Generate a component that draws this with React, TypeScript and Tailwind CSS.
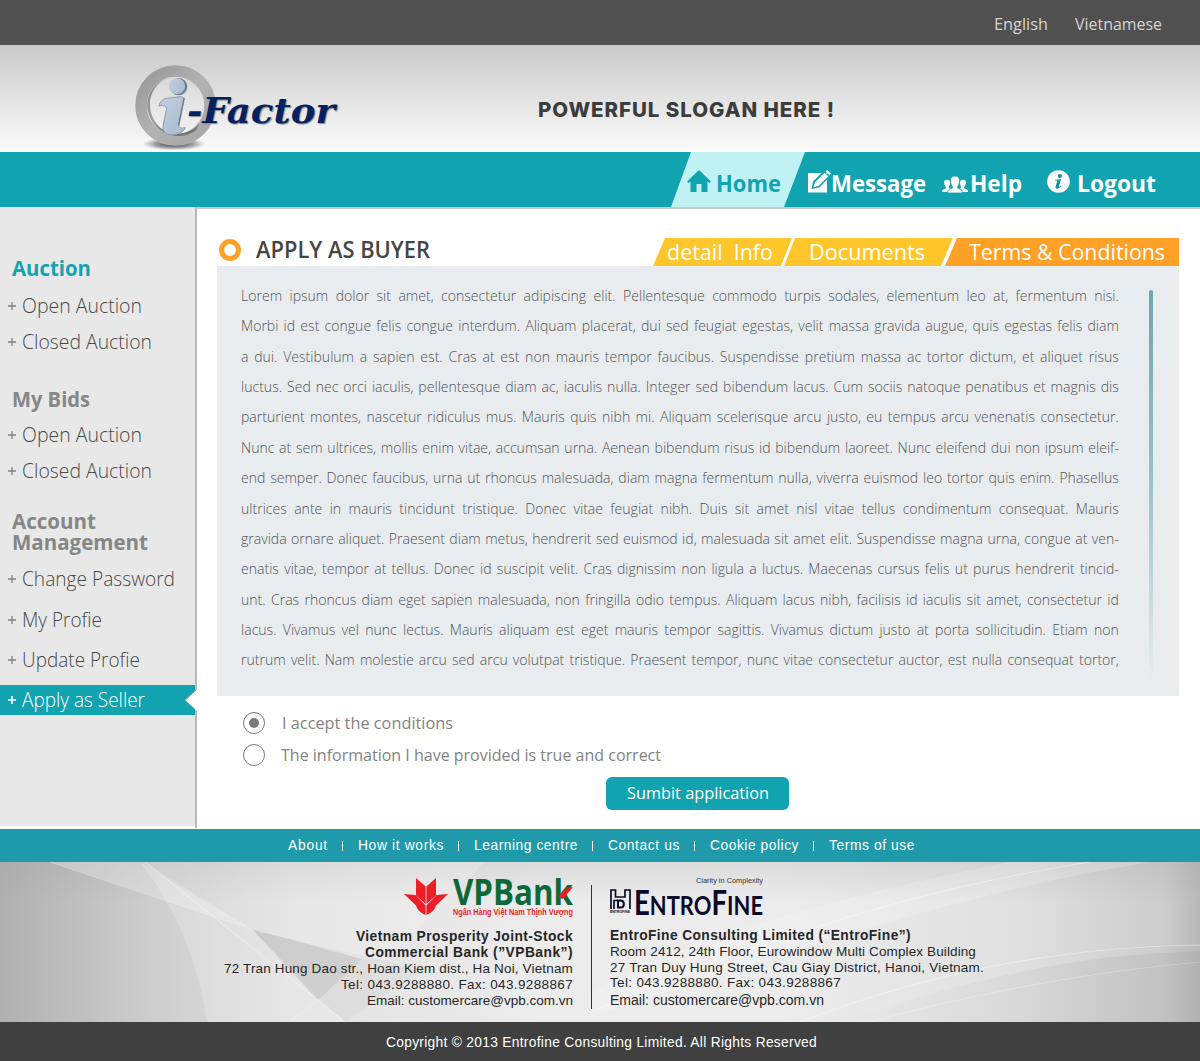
import { useLayoutEffect, useRef } from "react";
import type { ReactNode } from "react";

type FitProps = { className: string; spread?: boolean; children: ReactNode };

/** One line of text that fills its box exactly, by narrowing the glyphs or by letter spacing. */
function Fit({ className, spread, children }: FitProps) {
  const box = useRef<HTMLSpanElement>(null);
  const text = useRef<HTMLSpanElement>(null);
  useLayoutEffect(() => {
    const b = box.current;
    const t = text.current;
    if (!b || !t) return;
    t.style.transform = "none";
    t.style.letterSpacing = "0px";
    const want = b.clientWidth;
    const have = t.getBoundingClientRect().width;
    if (spread) {
      const n = (t.textContent || "").length;
      t.style.letterSpacing = `${(want - have) / n}px`;
    } else {
      t.style.transform = `scaleX(${want / have})`;
    }
  }, [spread]);
  return (
    <span ref={box} className={`block shrink-0 whitespace-nowrap ${className}`}>
      <span ref={text} className="inline-block origin-left whitespace-pre">
        {children}
      </span>
    </span>
  );
}

function Logo() {
  return (
    <div className="relative ml-[130px] mt-[17px] h-[90px] w-[212px]">
      <svg viewBox="130 62 90 90" className="h-[90px] w-[90px]">
        <defs>
          <linearGradient id="ring" x1="0" y1="0" x2="1" y2="1">
            <stop offset="0" stopColor="#979797" />
            <stop offset="0.5" stopColor="#b3b3b3" />
            <stop offset="1" stopColor="#a6a6a6" />
          </linearGradient>
          <linearGradient id="rim" x1="0" y1="0" x2="1" y2="1">
            <stop offset="0" stopColor="#858585" />
            <stop offset="1" stopColor="#b5b5b5" />
          </linearGradient>
          <radialGradient id="floor">
            <stop offset="0" stopColor="#222" stopOpacity="0.9" />
            <stop offset="0.6" stopColor="#444" stopOpacity="0.5" />
            <stop offset="1" stopColor="#777" stopOpacity="0" />
          </radialGradient>
          <linearGradient id="glyph" x1="0" y1="0" x2="1" y2="1">
            <stop offset="0" stopColor="#c3d0e0" />
            <stop offset="1" stopColor="#a9b9cd" />
          </linearGradient>
        </defs>
        <ellipse cx="174" cy="144" rx="32" ry="6.500" fill="url(#floor)" />
        <circle cx="175.500" cy="105.500" r="34.500" fill="none" stroke="url(#ring)" strokeWidth="11.500" />
        <path d="M168 77.500C152 84 146 96 147.500 109C150 124 161 133.500 172 134C160 130 151 120 150 107C149 94 156 83 168 77.500Z" fill="url(#rim)" />
        <path d="M154 122C160 130 169 133.500 178 133.500C187 133 194 130 199 124L196 130C190 135 184 136 177 136C167 135 159 130 154 122Z" fill="#747474" />
        <circle cx="178.600" cy="86.600" r="8.700" fill="#6b7d93" />
        <circle cx="177" cy="86.200" r="8" fill="url(#glyph)" />
        <path
          d="M159 106C160 100 165 98 170 98L181 96.500L184.500 98.500L179 125C179 128 181 128.500 185.500 127.500C184 132 177 135.500 170 134.800C164 134 162.500 130 163 126L166.500 109C166.500 105.500 164 105 159 106Z"
          fill="url(#glyph)"
          stroke="#8695a8"
          strokeWidth=".9"
        />
        <path d="M184 98L178.500 125.500" stroke="#66788f" strokeWidth="1.200" />
      </svg>
      <span className="absolute left-[57px] top-[23px] font-['DejaVu_Serif'] text-[36px] font-bold italic leading-[50px] text-[#06215f] [text-shadow:1px_1px_1px_#8a8a8a]">
        <Fit className="w-[148px]">-Factor</Fit>
      </span>
    </div>
  );
}

function HomeIcon() {
  return (
    <svg viewBox="0 0 24 22" className="h-[22px] w-[24px] fill-[#12a3b0]">
      <path d="M12 0L24 11.500L22.500 13L20.500 11.500V22H14.500V14H9.500V22H3.500V11.500L1.500 13L0 11.500Z" />
    </svg>
  );
}

function EditIcon() {
  return (
    <svg viewBox="0 0 23 23" className="h-[23px] w-[23px]">
      <path d="M0 3H19V22.500H0Z" fill="#fff" />
      <path d="M3.500 19L5 11.500L15.500 1L22 6.500L11.500 17.500Z" fill="#12a3b0" />
      <path d="M5.500 17.300L7 12.500L16.500 2.800L20.300 6.300L10.500 16Z" fill="#fff" />
      <path d="M17.500 1.700L19 0L23 3.500L21.500 5.300Z" fill="#fff" />
    </svg>
  );
}

function PeopleIcon() {
  return (
    <svg viewBox="0 0 26 17" className="h-[17px] w-[26px] fill-white">
      <path d="M0 16C0 14 1 13 4 12.200C4.500 11 2 9 2 6.500C2 4.500 3.500 3.500 5.500 3.800C7.500 4 8 5.500 8 7C8 9 6.500 11 7 12L9 13L7 16ZM26 16C26 14 25 13 22 12.200C21.500 11 24 9 24 6.500C24 4.500 22.500 3.500 20.500 3.800C18.500 4 18 5.500 18 7C18 9 19.500 11 19 12L17 13L19 16Z" />
      <path
        d="M5.500 17C5.500 14 7 13 10.500 12C11 10.500 8.500 9 8.500 4.500C8.500 2 10 0 13 0C16 0 17.500 2 17.500 4.500C17.500 9 15 10.500 15.500 12C19 13 20.500 14 20.500 17Z"
        stroke="#12a3b0"
        strokeWidth=".8"
      />
    </svg>
  );
}

function InfoIcon() {
  return (
    <svg viewBox="0 0 23 23" className="h-[23px] w-[23px]">
      <circle cx="11.500" cy="11.500" r="11.300" fill="#fff" />
      <circle cx="12.800" cy="6" r="2.100" fill="#128e9c" />
      <path d="M8 9.800L14 9.300L12 16.300C11.900 17.200 13 16.500 13.800 15.800L14.300 16.300C12.500 18.300 11 18.800 9.500 18.600C8.500 18.300 8.300 17.500 8.600 16.500L10.200 11C10.300 10.400 9.500 10.400 8 10.500Z" fill="#128e9c" />
    </svg>
  );
}

function Nav() {
  return (
    <nav className="flex h-[55px] bg-[#12a3b0] font-['Open_Sans'] text-[22.500px] font-bold leading-[63px] text-white">
      <div className="ml-[671px] flex w-[134px] bg-[#c0f2f4] pl-[16px] text-[#12a3b0] [clip-path:polygon(20px_0,134px_0,113px_100%,0_100%)]">
        <span className="mt-[18px]"><HomeIcon /></span>
        <Fit className="ml-[5px] w-[65px]">Home</Fit>
      </div>
      <div className="ml-[3px] flex">
        <span className="mt-[18px]"><EditIcon /></span>
        <Fit className="w-[95px]">Message</Fit>
      </div>
      <div className="ml-[16px] flex">
        <span className="mt-[24px]"><PeopleIcon /></span>
        <Fit className="ml-[2px] w-[52px]">Help</Fit>
      </div>
      <div className="ml-[25px] flex">
        <span className="mt-[18px]"><InfoIcon /></span>
        <Fit className="ml-[7px] w-[79px]">Logout</Fit>
      </div>
    </nav>
  );
}

function Plus({ className }: { className: string }) {
  return (
    <svg viewBox="0 0 8 8" className={`ml-[8px] mr-[6px] h-[8px] w-[8px] shrink-0 ${className}`}>
      <path d="M4 0V8M0 4H8" />
    </svg>
  );
}

function Item({ label, width, className }: { label: string; width: string; className: string }) {
  return (
    <li className={`flex items-center ${className}`}>
      <Plus className="stroke-[#808080] stroke-[1.300]" />
      <Fit className={width}>{label}</Fit>
    </li>
  );
}

function Sidebar() {
  return (
    <aside className="relative h-[619px] w-[195px] shrink-0 bg-[#e8e8e8] pt-[43px] font-['Open_Sans'] text-[21px] font-light leading-[34px] text-[#484848]">
      <h2 className="h-[38px] pl-[12px] text-[21.500px] font-bold leading-[36px] text-[#12a3b0]">
        <Fit className="w-[79px]">Auction</Fit>
      </h2>
      <ul>
        <Item label="Open Auction" width="w-[120px] h-[36px]" className="h-[36px]" />
        <Item label="Closed Auction" width="w-[130px] h-[36px]" className="h-[36px]" />
      </ul>
      <h2 className="mt-[21px] h-[36px] pl-[12px] text-[21.500px] font-bold leading-[36px] text-[#868686]">
        <Fit className="w-[78px]">My Bids</Fit>
      </h2>
      <ul>
        <Item label="Open Auction" width="w-[120px] h-[36px]" className="h-[36px]" />
        <Item label="Closed Auction" width="w-[130px] h-[36px]" className="h-[36px]" />
      </ul>
      <h2 className="mt-[22px] h-[48px] pl-[12px] text-[21px] font-bold leading-[21px] text-[#868686]">
        <Fit className="w-[84px]">Account</Fit>
        <Fit className="w-[136px]">Management</Fit>
      </h2>
      <ul>
        <Item label="Change Password" width="w-[153px] h-[36px]" className="h-[40px]" />
        <Item label="My Profie" width="w-[80px] h-[36px]" className="h-[41px]" />
        <Item label="Update Profie" width="w-[118px] h-[36px]" className="h-[40px]" />
      </ul>
      <div className="mt-[5px] flex h-[30px] items-center bg-[#12a3b0] text-white">
        <Plus className="stroke-white stroke-[1.600]" />
        <Fit className="h-[36px] w-[123px]">Apply as Seller</Fit>
      </div>
      <svg viewBox="0 0 12 22" className="absolute left-[185px] top-[482px] h-[22px] w-[12px]">
        <path d="M12 0V22L0 11Z" fill="#fff" />
        <path d="M11 1L0.500 11" stroke="#999" strokeWidth="1" />
      </svg>
    </aside>
  );
}

const TERMS = [
  "Lorem ipsum dolor sit amet, consectetur adipiscing elit. Pellentesque commodo turpis sodales, elementum leo at, fermentum nisi.",
  "Morbi id est congue felis congue interdum. Aliquam placerat, dui sed feugiat egestas, velit massa gravida augue, quis egestas felis diam",
  "a dui. Vestibulum a sapien est. Cras at est non mauris tempor faucibus. Suspendisse pretium massa ac tortor dictum, et aliquet risus",
  "luctus. Sed nec orci iaculis, pellentesque diam ac, iaculis nulla. Integer sed bibendum lacus. Cum sociis natoque penatibus et magnis dis",
  "parturient montes, nascetur ridiculus mus. Mauris quis nibh mi. Aliquam scelerisque arcu justo, eu tempus arcu venenatis consectetur.",
  "Nunc at sem ultrices, mollis enim vitae, accumsan urna. Aenean bibendum risus id bibendum laoreet. Nunc eleifend dui non ipsum eleif-",
  "end semper. Donec faucibus, urna ut rhoncus malesuada, diam magna fermentum nulla, viverra euismod leo tortor quis enim. Phasellus",
  "ultrices ante in mauris tincidunt tristique. Donec vitae feugiat nibh. Duis sit amet nisl vitae tellus condimentum consequat. Mauris",
  "gravida ornare aliquet. Praesent diam metus, hendrerit sed euismod id, malesuada sit amet elit. Suspendisse magna urna, congue at ven-",
  "enatis vitae, tempor at tellus. Donec id suscipit velit. Cras dignissim non ligula a luctus. Maecenas cursus felis ut purus hendrerit tincid-",
  "unt. Cras rhoncus diam eget sapien malesuada, non fringilla odio tempus. Aliquam lacus nibh, facilisis id iaculis sit amet, consectetur id",
  "lacus. Vivamus vel nunc lectus. Mauris aliquam est eget mauris tempor sagittis. Vivamus dictum justo at porta sollicitudin. Etiam non",
  "rutrum velit. Nam molestie arcu sed arcu volutpat tristique. Praesent tempor, nunc vitae consectetur auctor, est nulla consequat tortor,",
];

function Radio({ checked }: { checked?: boolean }) {
  return (
    <span className="flex h-[22px] w-[22px] items-center justify-center rounded-full border border-[#7a7a7a]">
      {checked && <span className="h-[10px] w-[10px] rounded-full bg-[#7a7a7a]" />}
    </span>
  );
}

function Main() {
  return (
    <main className="h-[621px] w-[1005px] border-l-2 border-t-2 border-l-[#b9b9b9] border-t-[#c9c9c9] bg-white pl-[20px] font-['Open_Sans']">
      <div className="flex h-[57px] w-[962px] items-end">
        <div className="ml-[2px] flex h-[28px] w-[436px] items-center">
          <span className="-mt-[5px] h-[22px] w-[22px] rounded-full border-[5.500px] border-[#ffa027]" />
          <h1 className="-mt-[4px] ml-[15px] text-[22.500px] font-semibold leading-[28px] text-[#454545]">
            <Fit className="w-[174px]">APPLY AS BUYER</Fit>
          </h1>
        </div>
        <div className="flex h-[28px] text-[22.500px] leading-[27px] text-white">
          <div className="-ml-[2px] w-[139px] bg-[#ffc62c] pl-[14px] [clip-path:polygon(12px_0,100%_0,128px_100%,0_100%)]">
            <Fit className="w-[106px]">detail  Info</Fit>
          </div>
          <div className="-ml-[8px] w-[169px] bg-[#ffc62c] pl-[25px] [clip-path:polygon(11px_0,100%_0,157px_100%,0_100%)]">
            <Fit className="w-[116px]">Documents</Fit>
          </div>
          <div className="-ml-[8px] w-[234px] bg-[#ffa027] pl-[24px] [clip-path:polygon(12px_0,100%_0,100%_100%,0_100%)]">
            <Fit className="w-[196px]">Terms &amp; Conditions</Fit>
          </div>
        </div>
      </div>
      <section className="flex h-[430px] w-[962px] bg-[#e8ecef] pl-[24px] pt-[15px]">
        <div className="w-[908px]">
          <div className="w-[905px] origin-top-left scale-x-[0.97] text-[14.500px] font-light leading-[30.360px] text-[#505355]">
            {TERMS.map((line) => (
              <p key={line} className="whitespace-nowrap [text-align-last:justify]">{line}</p>
            ))}
          </div>
        </div>
        <div className="mt-[9px] h-[392px] w-[4px] rounded-full bg-linear-to-b from-[#69a8ad] via-[#9bc2c6] to-[#e8ecef]" />
      </section>
      <form className="pl-[26px] pt-[16px] text-[16.500px] leading-[22px] text-[#828282]">
        <label className="flex h-[22px] items-center">
          <Radio checked />
          <Fit className="ml-[17px] w-[171px]">I accept the conditions</Fit>
        </label>
        <label className="mt-[10px] flex h-[22px] items-center">
          <Radio />
          <Fit className="ml-[16px] w-[380px]">The information I have provided is true and correct</Fit>
        </label>
        <button type="button" className="ml-[363px] mt-[11px] flex h-[33px] w-[183px] items-center justify-center rounded-[6px] bg-[#12a3b0] pb-px text-left text-white">
          <Fit className="w-[142px]">Sumbit application</Fit>
        </button>
      </form>
    </main>
  );
}

function FooterNav() {
  const bar = <span className="h-[10px] w-px bg-white" />;
  return (
    <div className="flex h-[33px] items-center bg-[#1f9aaa] pl-[288px] font-['Liberation_Sans'] text-[13.800px] leading-[33px] text-white">
      <Fit spread className="w-[40px]">About</Fit>
      <span className="flex w-[30px] justify-center pr-[2px]">{bar}</span>
      <Fit spread className="w-[86px]">How it works</Fit>
      <span className="flex w-[30px] justify-center pr-[2px]">{bar}</span>
      <Fit spread className="w-[104px]">Learning centre</Fit>
      <span className="flex w-[30px] justify-center pr-[2px]">{bar}</span>
      <Fit spread className="w-[72px]">Contact us</Fit>
      <span className="flex w-[30px] justify-center pr-[2px]">{bar}</span>
      <Fit spread className="w-[89px]">Cookie policy</Fit>
      <span className="flex w-[30px] justify-center pr-[2px]">{bar}</span>
      <Fit spread className="w-[86px]">Terms of use</Fit>
    </div>
  );
}

function FooterBackdrop() {
  return (
    <svg viewBox="0 0 1200 160" preserveAspectRatio="none" className="absolute inset-0 h-full w-full">
      <defs>
        <linearGradient id="sheet">
          <stop offset="0" stopColor="#b0b0b0" />
          <stop offset="0.120" stopColor="#cccccc" />
          <stop offset="0.250" stopColor="#e2e2e2" />
          <stop offset="0.450" stopColor="#ececec" />
          <stop offset="0.650" stopColor="#ececec" />
          <stop offset="0.850" stopColor="#e0e0e0" />
          <stop offset="0.970" stopColor="#cccccc" />
          <stop offset="1" stopColor="#b8b8b8" />
        </linearGradient>
        <linearGradient id="swoosh">
          <stop offset="0" stopColor="#999" stopOpacity="0" />
          <stop offset="1" stopColor="#999" stopOpacity="0.220" />
        </linearGradient>
        <linearGradient id="fade" x1="0" y1="0" x2="0" y2="1">
          <stop offset="0" stopColor="#999" stopOpacity="0.200" />
          <stop offset="1" stopColor="#999" stopOpacity="0" />
        </linearGradient>
      </defs>
      <rect width="1200" height="160" fill="url(#sheet)" />
      <rect width="1200" height="40" fill="url(#fade)" />
      <path d="M50 0H145L252 67Z" fill="#fff" opacity=".25" />
      <path d="M140 0L252 67L345 160H207C200 110 180 50 140 0Z" fill="#fff" opacity=".2" />
      <path d="M145 0H485L385 98L252 67Z" fill="#fff" opacity=".18" />
      <path d="M252 67L362 97L318 138Z" fill="#aaa" opacity=".35" />
      <path d="M362 97L385 98L420 110L345 160L318 138Z" fill="#aaa" opacity=".12" />
      <path d="M145 0L345 160" stroke="#fff" opacity=".45" />
      <path d="M50 0L250 67L385 98M318 138L290 160" stroke="#fff" fill="none" opacity=".3" />
      <path d="M590 155C760 100 960 30 1150 0H1010C860 30 700 70 590 130Z" fill="#fff" opacity=".18" />
      <path d="M590 150C760 80 900 30 1090 0M800 160C930 110 1060 85 1200 83" stroke="#fff" fill="none" opacity=".4" />
      <path d="M840 160C960 120 1080 90 1200 90V160Z" fill="url(#swoosh)" />
      <path d="M870 160C980 130 1090 110 1200 100" stroke="#fff" fill="none" opacity=".25" />
    </svg>
  );
}

function VPBankLogo() {
  return (
    <div className="flex h-[40px] w-[169px]">
      <svg viewBox="0 0 44 38" className="mt-[3px] h-[38px] w-[44px] fill-[#ec1f27]">
        <path d="M12 0L21.600 8.500V26L12 17.500ZM32 0L22.400 8.500V26L32 17.500Z" />
        <path d="M0 16L11.500 17L21.600 27.500V37L18.500 35.500C15 33 13 31 12 27.500ZM44 16L32.500 17L22.400 27.500V37L25.500 35.500C29 33 31 31 32 27.500Z" />
      </svg>
      <div className="relative ml-[5px] w-[120px]">
        <div className="pt-px font-['Open_Sans'] text-[36px] font-bold leading-[32px] text-[#0d6a37]">
          <Fit className="w-[120px]">VPBank</Fit>
        </div>
        <svg viewBox="0 0 14 12" className="absolute left-[106px] top-[12px] h-[12px] w-[14px] fill-[#ec1f27]">
          <path d="M14 0C9 0 3 4 0 10L4 12L7 9C9 5 12 3 14 0Z" />
        </svg>
        <div className="font-['Liberation_Sans'] text-[9px] font-bold leading-[9px] text-[#ec1f27]">
          <Fit className="w-[120px]">Ngân Hàng Việt Nam Thịnh Vượng</Fit>
        </div>
      </div>
    </div>
  );
}

function EntroFineLogo() {
  return (
    <div className="flex h-[40px] w-[153px] text-[#0c0a26]">
      <div className="w-[21px] pt-[14px]">
        <svg viewBox="0 0 21 20" className="h-[20px] w-[21px] fill-none stroke-[#0c0a26]">
          <path d="M1 20V1H5.500V8H15V1H20V20M8 11.500H4V20" strokeWidth="1.700" />
          <path d="M8 11.500V18.500H10.500C15 18.500 15 11.500 10.500 11.500Z" strokeWidth="2" />
        </svg>
        <div className="pt-px font-['Liberation_Sans'] text-[4px] font-bold leading-[4px]">
          <Fit className="w-[20px]">ENTROFINE</Fit>
        </div>
      </div>
      <div className="ml-[3px] w-[129px]">
        <div className="pl-[62px] font-['Liberation_Sans'] text-[8px] leading-[11px] text-[#333]">
          <Fit className="w-[67px]">Clarity in Complexity</Fit>
        </div>
        <div className="font-['Lato'] text-[34px] font-bold leading-[31px]">
          <Fit className="w-[129px]">
            E<span className="text-[27px]">NTRO</span>F<span className="text-[27px]">INE</span>
          </Fit>
        </div>
      </div>
    </div>
  );
}

function Footer() {
  return (
    <footer className="font-['Liberation_Sans']">
      <FooterNav />
      <div className="relative h-[160px]">
        <FooterBackdrop />
        <div className="relative flex text-[13.500px] text-[#262626]">
          <div className="flex w-[573px] flex-col items-end pt-[13px]">
            <VPBankLogo />
            <div className="flex flex-col items-end pt-[14px] leading-[16px]">
              <Fit spread className="w-[217px] text-[13.800px] font-bold">Vietnam Prosperity Joint-Stock</Fit>
              <Fit spread className="w-[208px] text-[13.800px] font-bold">Commercial Bank (”VPBank”)</Fit>
              <Fit spread className="w-[349px]">72 Tran Hung Dao str., Hoan Kiem dist., Ha Noi, Vietnam</Fit>
              <Fit spread className="w-[232px]">Tel: 043.9288880. Fax: 043.9288867</Fit>
              <Fit spread className="w-[206px] leading-[15px]">Email: customercare@vpb.com.vn</Fit>
            </div>
          </div>
          <div className="ml-[18px] mt-[23px] h-[124px] w-px bg-[#333]" />
          <div className="ml-[18px] pt-[13px]">
            <EntroFineLogo />
            <div className="pt-[13px] leading-[16px]">
              <Fit spread className="w-[301px] text-[13.800px] font-bold">EntroFine Consulting Limited (“EntroFine”)</Fit>
              <Fit spread className="w-[366px]">Room 2412, 24th Floor, Eurowindow Multi Complex Building</Fit>
              <Fit spread className="w-[374px] leading-[15px]">27 Tran Duy Hung Street, Cau Giay District, Hanoi, Vietnam.</Fit>
              <Fit spread className="w-[231px]">Tel: 043.9288880. Fax: 043.9288867</Fit>
              <Fit spread className="w-[214px] text-[14px] leading-[18px]">Email: customercare@vpb.com.vn</Fit>
            </div>
          </div>
        </div>
      </div>
      <div className="flex h-[39px] justify-center bg-[#404040] pl-[3px] text-[13.800px] leading-[41px] text-white">
        <Fit spread className="w-[431px]">Copyright © 2013 Entrofine Consulting Limited. All Rights Reserved</Fit>
      </div>
    </footer>
  );
}

export default function App() {
  return (
    <div className="h-[1061px] w-[1200px] overflow-hidden bg-white">
      <div className="flex h-[45px] justify-end bg-[#505050] pr-[38px] font-['Open_Sans'] text-[16.500px] leading-[48px] text-[#d5d5d5]">
        <Fit className="w-[54px]">English</Fit>
        <Fit className="ml-[27px] w-[87px]">Vietnamese</Fit>
      </div>
      <header className="flex h-[107px] bg-linear-to-b from-[#cacaca] to-[#fbfbfb]">
        <Logo />
        <div className="ml-[196px] mt-[49px] font-['Inter'] text-[20.500px] font-extrabold leading-[32px] text-[#3c3c3c]">
          <Fit spread className="w-[297px]">POWERFUL SLOGAN HERE !</Fit>
        </div>
      </header>
      <Nav />
      <div className="flex h-[622px] bg-[#fbfbf8]">
        <Sidebar />
        <Main />
      </div>
      <Footer />
    </div>
  );
}
